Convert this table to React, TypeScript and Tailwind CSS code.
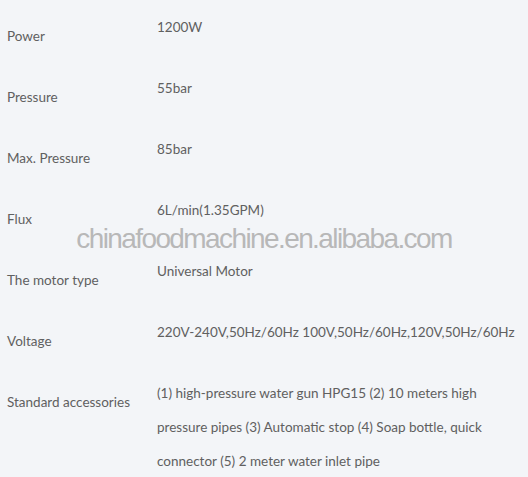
import React from 'react';

const specs = [
  { label: 'Power', value: '1200W' },
  { label: 'Pressure', value: '55bar' },
  { label: 'Max. Pressure', value: '85bar' },
  { label: 'Flux', value: '6L/min(1.35GPM)' },
  { label: 'The motor type', value: 'Universal Motor' },
  { label: 'Voltage', value: '220V-240V,50Hz/60Hz 100V,50Hz/60Hz,120V,50Hz/60Hz' },
  {
    label: 'Standard accessories',
    value:
      '(1) high-pressure water gun HPG15 (2) 10 meters high pressure pipes (3) Automatic stop (4) Soap bottle, quick connector (5) 2 meter water inlet pipe',
  },
];

const App = () => {
  return (
    <div className="relative w-[528px] h-[477px] overflow-hidden bg-[#f3f5f8] text-[13.5px] text-[#606060] font-['Lato','Open_Sans',sans-serif]">
      {specs.map(row => (
        <div key={row.label} className="flex pt-[10px] pb-[8px]">
          <div className="w-[157px] shrink-0 pl-[7px] pt-[9px] leading-[34px]">{row.label}</div>
          <div className="flex-1 pr-[6px] leading-[34px]">{row.value}</div>
        </div>
      ))}

      {/* watermark */}
      <div className="pointer-events-none absolute left-0 right-0 top-[221px] text-center font-['Liberation_Sans',Arial,sans-serif] text-[28px] leading-[36px] tracking-[-1.6px] text-[#b8b8b8]">
        chinafoodmachine.en.alibaba.com
      </div>
    </div>
  );
};

export default App;
